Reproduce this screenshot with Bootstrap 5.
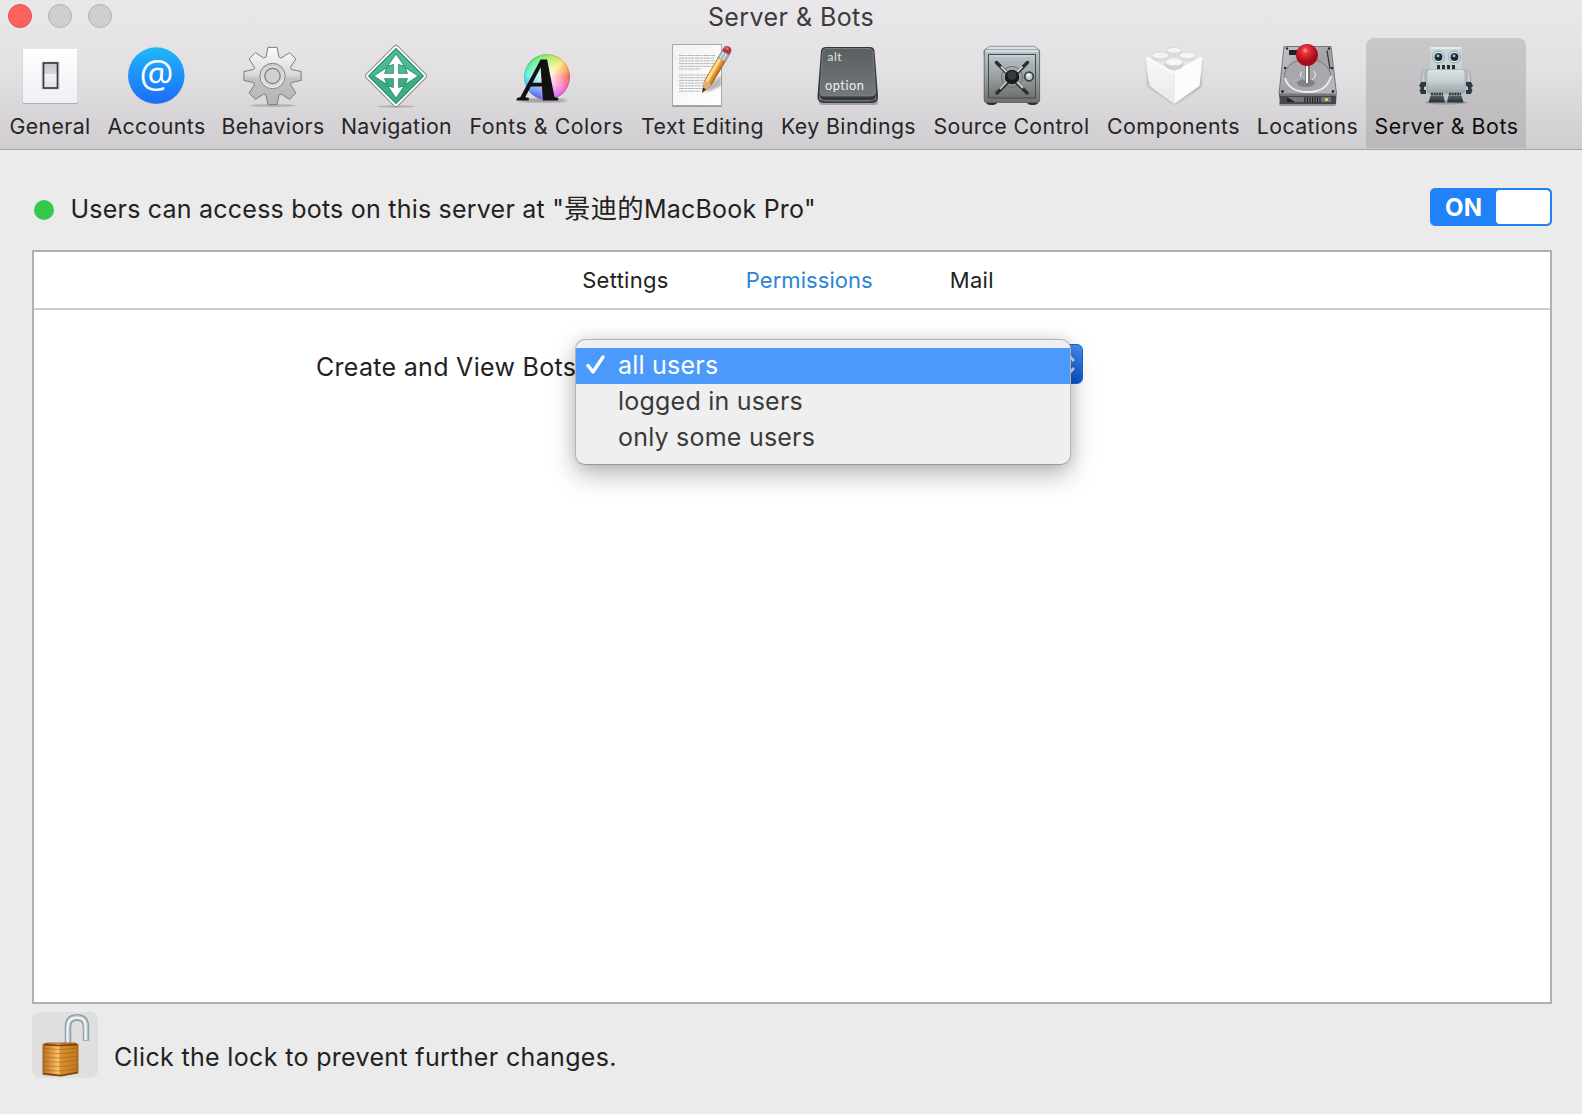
<!DOCTYPE html>
<html lang="en">
<head>
<meta charset="utf-8">
<title>Server &amp; Bots</title>
<link href="https://cdn.jsdelivr.net/npm/bootstrap@5.3.0/dist/css/bootstrap.min.css" rel="stylesheet">
<style>
body{font-family:Inter,"Noto Sans CJK SC",sans-serif;font-size:25px;letter-spacing:.34px;color:#222;background:#ebebeb;height:1114px;overflow:hidden}
.win-head{height:150px;background:linear-gradient(#e9e7e9,#e3e1e4 45%,#cfcdd0);border-bottom:1px solid #a5a3a6}
.title-bar{height:34px;margin-bottom:4px}
.win-title{line-height:34px;color:#3b3a3c;letter-spacing:.43px}
.light{width:24px;height:24px;border-radius:50%;background:#cfcfcf;border:1px solid #b2b0b3}
.light-red{background:#fc615d;border-color:#e0504d}
.lights{gap:16px;left:8px;top:4px}
.tool{height:110px;padding-top:6px;font-size:21.3px;letter-spacing:.38px;color:#262527;border-radius:8px 8px 0 0}
.tool svg{width:64px;height:64px;display:block;overflow:visible;letter-spacing:0}
.tool span{line-height:28px;margin-top:4px;padding-left:1px;white-space:nowrap}
.tool.chosen{background:linear-gradient(#c9c7ca,#bbb9bc);color:#0d0d0d}
.w1{width:99px}.w2{width:114px}.w3{width:119px}.w4{width:128px}.w5{width:172px;letter-spacing:.55px}.w6{width:140px;letter-spacing:.43px}.w7{width:152px;letter-spacing:.4px}.w8{width:174px}.w9{width:150px;letter-spacing:.44px}.w10{width:118px}.w11{width:160px;letter-spacing:.55px}
.page{padding:38px 30px 0 32px}
.status-row{height:38px}
.status-info{padding-top:6px}
.dot{width:20px;height:20px;border-radius:50%;background:#35c84a;margin-left:2px}
.status-text{line-height:32px;margin-left:16.5px;margin-top:-2px;letter-spacing:.22px}
.status-text span{font-size:26.4px;line-height:1}
.toggle{width:122px;height:38px;border-radius:5px;background:#2182f7;padding:2px;color:#fff;font-weight:700;font-size:24px}
.toggle i{width:54px;height:34px;border-radius:4px;background:#fff}
.toggle span{margin-left:13px;line-height:36px}
.panel{margin-top:24px;height:754px;border:2px solid #b0b0b0;background:#fff}
.tabs{height:58px;border-bottom:2px solid #ccc;font-size:22px;line-height:56px;gap:77px;padding-right:8px;letter-spacing:.3px}
.tabs a{color:#1f1f1f;text-decoration:none}
.tabs a.on{color:#2e84d6;letter-spacing:.06px}
.form-line{margin-top:34px;padding-left:282px}
.form-line label{line-height:46px;width:260px;white-space:nowrap;letter-spacing:.3px}
.picker{width:507px;height:40px;border-radius:6px;background:linear-gradient(#468ff0,#0a56d0);border:1px solid #1c62cf}
.picker>svg{width:20px;height:32px;right:7px;top:3px}
.menu{left:-2px;top:-6px;width:496px;height:126px;padding:8px 0;background:#efefef;border:1px solid #b3b3b3;border-bottom-color:#989898;border-radius:10px;box-shadow:0 10px 26px rgba(0,0,0,.27),0 0 14px rgba(0,0,0,.1);color:#3a3a3a;z-index:2;letter-spacing:.22px}
.menu div{height:36px;line-height:34px;padding-left:42px;white-space:nowrap}
.menu div.hot{background:#4a99fb;color:#fff}
.menu svg{left:9px;top:14px;width:22px;height:22px}
.foot{margin-top:8px}
.lock{width:66px;height:66px;border-radius:8px;background:#dfdfdf}
.foot span{line-height:42px;padding-top:24px;margin-left:16px}
.wheel{width:46px;height:46px;border-radius:50%;background:radial-gradient(#fff 3%,#ffffff00 75%),conic-gradient(#8be854,#f6e650 45deg,#fb5b50 90deg,#f657c4 125deg,#d75cf5 155deg,#4a5df0 210deg,#46b4f5 245deg,#46f0e0 275deg,#4ce77c 320deg,#8be854);box-shadow:inset 0 0 2px rgba(0,0,0,.45)}
</style>
</head>
<body>
<header class="win-head">
  <div class="title-bar position-relative d-flex justify-content-center">
    <div class="lights position-absolute d-flex"><i class="light light-red"></i><i class="light"></i><i class="light"></i></div>
    <span class="win-title">Server &amp; Bots</span>
  </div>
  <nav class="d-flex">
    <div class="tool w1 d-flex flex-column align-items-center">
      <svg viewBox="0 0 64 64"><defs><linearGradient id="g1" x2="0" y2="1"><stop stop-color="#fff"/><stop offset="1" stop-color="#eef0f4"/></linearGradient><linearGradient id="g1b" x2="0" y2="1"><stop stop-color="#c4c7cd"/><stop offset=".42" stop-color="#d5d7dc"/><stop offset=".45" stop-color="#f1f2f5"/><stop offset="1" stop-color="#dfe1e5"/></linearGradient></defs>
      <rect x="4.800" y="5.500" width="55" height="54.500" rx="1" fill="#9c9aa0" opacity=".7"/><rect x="5" y="5" width="54.600" height="54" rx="1" fill="url(#g1)"/><rect x="23.500" y="17.500" width="18" height="28" rx="1" fill="#b9bbc2" opacity=".6"/><rect x="25.500" y="19" width="14" height="25" fill="url(#g1b)" stroke="#3b3c41" stroke-width="1.700"/></svg>
      <span>General</span>
    </div>
    <div class="tool w2 d-flex flex-column align-items-center">
      <svg viewBox="0 0 64 64"><defs><linearGradient id="g2" x2="0" y2="1"><stop stop-color="#20b7f8"/><stop offset="1" stop-color="#1b6cfa"/></linearGradient></defs>
      <circle cx="32.300" cy="32.300" r="28" fill="#7a8ba8" opacity=".5"/><circle cx="32.300" cy="31.500" r="28.200" fill="url(#g2)"/><text x="32.500" y="43.700" font-family="Open Sans" font-size="38" fill="#fff" text-anchor="middle">@</text></svg>
      <span>Accounts</span>
    </div>
    <div class="tool w3 d-flex flex-column align-items-center">
      <svg viewBox="0 0 64 64"><defs><linearGradient id="g3" x2="0" y2="1"><stop stop-color="#fbfbfb"/><stop offset=".48" stop-color="#dadada"/><stop offset=".55" stop-color="#c2c2c2"/><stop offset="1" stop-color="#b5b5b5"/></linearGradient><linearGradient id="g3b" x2="0" y2="1"><stop stop-color="#c6c6c6"/><stop offset="1" stop-color="#f2f2f2"/></linearGradient></defs>
      <ellipse cx="31.500" cy="61.500" rx="23" ry="1.500" fill="#777" opacity=".4"/>
      <g transform="translate(31.500 32)"><path d="M-6.500-18.900-4.500-28.600H4.500L6.500-18.900 8.800-18 17-23.400 23.400-17 18-8.800 18.900-6.500 28.600-4.500V4.500L18.900 6.500 18 8.800 23.400 17 17 23.400 8.800 18 6.500 18.900 4.500 28.600H-4.500L-6.500 18.900-8.800 18-17 23.400-23.400 17-18 8.800-18.900 6.500-28.600 4.500V-4.500L-18.900-6.500-18-8.800-23.400-17-17-23.400-8.800-18Z" fill="url(#g3)" stroke="#7c7c7c" stroke-width="1" stroke-linejoin="round"/><circle r="12.700" fill="url(#g3b)" stroke="#858585"/><circle r="10.500" fill="#d9d9d9"/><circle r="7.700" fill="#d1d0d2" stroke="#7c7c7c" stroke-width="1.200"/></g></svg>
      <span>Behaviors</span>
    </div>
    <div class="tool w4 d-flex flex-column align-items-center">
      <svg viewBox="0 0 64 64"><ellipse cx="32" cy="62.500" rx="19" ry="1.200" fill="#666" opacity=".35"/>
      <rect x="9.600" y="9.600" width="44.800" height="44.800" rx="3" transform="rotate(45 32 32)" fill="#fff" stroke="#8d8d8d"/><rect x="11.900" y="11.900" width="40.200" height="40.200" rx="1.500" transform="rotate(45 32 32)" fill="#2a8f68"/><rect x="13.100" y="13.100" width="37.800" height="37.800" rx="1" transform="rotate(45 32 32)" fill="#3aaf84"/><path d="M32 5.500 58.500 32H5.500Z" fill="#6bd0ad" opacity=".35"/>
      <path d="M32 10.500 39.500 21.500 34.200 20V29.800H44L42 24.500 53.500 32 42 39.500 44 34.200H34.200V44L39.500 42.500 32 53.500 24.500 42.500 29.800 44V34.200H20L22 39.500 10.500 32 22 24.500 20 29.800H29.800V20L24.500 21.500Z" fill="#fff" stroke="#24835f" stroke-width="1.400" paint-order="stroke"/></svg>
      <span>Navigation</span>
    </div>
    <div class="tool w5 d-flex flex-column align-items-center">
      <svg viewBox="0 0 64 64"><defs><filter id="b5"><feGaussianBlur stdDeviation="1.500"/></filter></defs><ellipse cx="29" cy="56.500" rx="24" ry="2" fill="#444" opacity=".5" filter="url(#b5)"/><foreignObject x="10" y="10" width="46" height="46"><div class="wheel"></div></foreignObject><text x="6.500" y="56" font-family="Liberation Serif" font-style="italic" font-size="61" fill="#111" stroke="#111" stroke-width="1.200" textLength="37" lengthAdjust="spacingAndGlyphs">A</text><path d="M28.500 18 31 54" stroke="#111" stroke-width="4.500"/></svg>
      <span>Fonts &amp; Colors</span>
    </div>
    <div class="tool w6 d-flex flex-column align-items-center">
      <svg viewBox="0 0 64 64"><defs><linearGradient id="g6" x2="1" y2="1"><stop stop-color="#f2f2f2"/><stop offset="1" stop-color="#fff"/></linearGradient><linearGradient id="g6b"><stop stop-color="#f7cf5e"/><stop offset=".35" stop-color="#fce58c"/><stop offset=".5" stop-color="#f3a83d"/><stop offset="1" stop-color="#b8641c"/></linearGradient><filter id="b6"><feGaussianBlur stdDeviation="1.300"/></filter></defs>
      <rect x="2" y="1" width="50" height="62" fill="#777" opacity=".6"/><rect x="2.500" y=".5" width="49" height="61" fill="url(#g6)" stroke="#a9a9ab"/>
      <path d="M9 11.500H45M9 14.200H44M9 16.900H45M9 19.600H44M9 22.300H43M9 25H31M9 31H44M9 33.700H42M9 36.400H41M9 39.100H39M9 41.800H38M9 44.500H34M9 47.200H31" stroke="#b8b8b8" stroke-width="1" stroke-dasharray="5 .6 3 .5 6 .7"/>
      <path d="M33 48 51 31V42L40 47Z" fill="#555" opacity=".42" filter="url(#b6)"/>
      <g transform="translate(32.300 48.500) rotate(30.500)"><path d="M0 0-4-11V-40H4V-11Z" fill="url(#g6b)" stroke="#915016" stroke-width=".6"/><path d="M0 0-4-11 0-12.500 4-11Z" fill="#e2ae7c"/><path d="M0 0-1.600-4.600H1.600Z" fill="#222"/><rect x="-4.300" y="-46" width="8.600" height="8" fill="#a4aeb5" stroke="#7a838a" stroke-width=".5"/><path d="M-2-46V-38M1-46V-38" stroke="#dfe6ea" stroke-width="1.300"/><path d="M-4.300-46V-49Q-4-53 0-53T4.300-49V-46Z" fill="#b83744"/><ellipse cx="-1" cy="-50.500" rx="1.800" ry="1.100" fill="#de7b82"/></g></svg>
      <span>Text Editing</span>
    </div>
    <div class="tool w7 d-flex flex-column align-items-center">
      <svg viewBox="0 0 64 64"><defs><linearGradient id="g7" x2="0" y2="1"><stop stop-color="#5b5f60"/><stop offset="1" stop-color="#72777a"/></linearGradient></defs>
      <rect x="3" y="54" width="59" height="7" rx="3" fill="#777" opacity=".55"/><path d="M10 3H54Q58 3 58.500 7L62 52Q62.500 59 56 59H8Q1 59 1.500 52L5 7Q5.500 3 10 3Z" fill="#35383a"/><path d="M3 50 5 54Q6 56 10 56H55Q59 56 61 50L60 56 53 57.500H10L3 56Z" fill="#707376"/><path d="M10 4.500H53Q56.500 4.500 57 8L59.500 48Q59.500 52 55.500 52H8Q3.500 52 4 48L6.500 8Q7 4.500 10 4.500Z" fill="url(#g7)" stroke="#85898b" stroke-width=".8"/>
      <text x="11.500" y="17" font-family="Lato, sans-serif" font-size="12" letter-spacing=".5" fill="#e4e4e4">alt</text><text x="9" y="46" font-family="Lato, sans-serif" font-size="12.800" letter-spacing=".5" fill="#eee">option</text></svg>
      <span>Key Bindings</span>
    </div>
    <div class="tool w8 d-flex flex-column align-items-center">
      <svg viewBox="0 0 64 64"><defs><linearGradient id="g8" x2="0" y2="1"><stop stop-color="#b7c5ca"/><stop offset=".5" stop-color="#9ba1a2"/><stop offset="1" stop-color="#6f6f6f"/></linearGradient></defs>
      <path d="M7 57H18V59Q17 61 12 61T7 58ZM48 57H59V59Q58 61 53 61T48 58Z" fill="#2d2d2d"/><path d="M11 2.300H55L60.500 6V10H5V6Z" fill="#dce4e7" stroke="#78858a" stroke-width=".8"/><rect x="5.200" y="6" width="55.400" height="52.500" rx="2.500" fill="url(#g8)" stroke="#59605f" stroke-width=".9"/><path d="M6.500 7H59.500" stroke="#e6eef0" stroke-width="1.300"/><rect x="9.500" y="10.500" width="47" height="43.500" fill="url(#g8)" stroke="#444b4d"/><path d="M10.500 12H55.500" stroke="#dbe5e8" stroke-width=".8"/>
      <circle cx="33" cy="33" r="10.500" fill="none" stroke="#687073" stroke-width="1"/><path d="M17.500 18.500 48 49M48.500 18.500 18 49" stroke="#2c2e30" stroke-width="3.400" stroke-linecap="round"/><path d="M22 22.500 28 28.500M37.500 37.500 44 44M43.500 22.500 38 28M28 37.500 21 45" stroke="#cfd3d5" stroke-width="1.800"/><circle cx="33" cy="33" r="7.200" fill="#18191b"/><circle cx="33" cy="31.500" r="4.500" fill="#393a3f"/><circle cx="50" cy="32.500" r="4.300" fill="#c4cacc" stroke="#3a3f41" stroke-width="1.700"/><circle cx="49.500" cy="31" r="1.800" fill="#f0f3f4"/></svg>
      <span>Source Control</span>
    </div>
    <div class="tool w9 d-flex flex-column align-items-center">
      <svg viewBox="0 0 64 64"><defs><linearGradient id="g9" x2="0" y2="1"><stop stop-color="#f8f8f8"/><stop offset="1" stop-color="#e9e9e9"/></linearGradient><filter id="b9"><feGaussianBlur stdDeviation="1.800"/></filter></defs>
      <path d="M6 16 60 16 60 43 33 60 7 42Z" fill="#777" opacity=".55" filter="url(#b9)"/><path d="M5 13.500 27 5.500H39L61 13.500 33 29Z" fill="#e9e9e9"/><path d="M5 13.500 33 29V60L8.500 42Q5.500 28 5 13.500Z" fill="url(#g9)"/><path d="M61 13.500 33 29V60L58.500 42Q60.500 28 61 13.500Z" fill="#fcfcfc"/><path d="M5 13.500 33 29 61 13.500" fill="none" stroke="#fff" stroke-width="1.500"/><path d="M33 29V60" stroke="#e2e2e2" stroke-width=".8"/>
      <g stroke="#cfcfcf" stroke-width=".6"><path d="M25.500 6V9Q26 12.500 33 12.500T40.500 9V6Z" fill="#dcdcdc"/><ellipse cx="33" cy="6.300" rx="7.500" ry="2.900" fill="#f4f4f4"/><path d="M11 11.500V13.500Q12 17 19.500 17T28 13.500V11.500Z" fill="#dcdcdc"/><ellipse cx="19.500" cy="11.500" rx="8.500" ry="3.300" fill="#f4f4f4"/><path d="M38 11.500V13.500Q39 17 46.500 17T55 13.500V11.500Z" fill="#dcdcdc"/><ellipse cx="46.500" cy="11.500" rx="8.500" ry="3.300" fill="#f4f4f4"/><path d="M24 18.500V21Q25 25.500 33 25.500T42 21V18.500Z" fill="#d2d2d2"/><ellipse cx="33" cy="18" rx="9" ry="3.900" fill="#f6f6f6"/></g></svg>
      <span>Components</span>
    </div>
    <div class="tool w10 d-flex flex-column align-items-center">
      <svg viewBox="0 0 64 64"><defs><linearGradient id="g10" x2="1" y2="1"><stop stop-color="#c9c9cc"/><stop offset=".5" stop-color="#a2a2a6"/><stop offset="1" stop-color="#bcbcc0"/></linearGradient><radialGradient id="g10b" cx=".42" cy=".3"><stop stop-color="#ff9a92"/><stop offset=".3" stop-color="#e5333a"/><stop offset="1" stop-color="#a80c1a"/></radialGradient></defs>
      <rect x="4" y="57" width="57" height="5" rx="2" fill="#555" opacity=".5"/><path d="M9 2.500H56L61.500 50H4Z" fill="url(#g10)" stroke="#6c6c70" stroke-width=".9"/><path d="M4 50H61.500L61 60H5Z" fill="#46464c"/><path d="M5 51H61" stroke="#a5a5aa" stroke-width="1.200"/><path d="M12 53H56V58H12Z" fill="#74747c"/><path d="M12 53 20 58H12Z" fill="#222"/><path d="M30 53V58.500M32.500 53V58.500M35 53V58.500M37.500 53V58.500M40 53V58.500M42.500 53V58.500M45 53V58.500" stroke="#1e1e22" stroke-width="1.200"/><circle cx="51.500" cy="55.500" r="1.600" fill="#eee543"/>
      <ellipse cx="32.500" cy="31.500" rx="23" ry="16.500" fill="#a9a9ad" stroke="#77777b"/><path d="M10 34Q14 48 33 48T56 32" fill="none" stroke="#eee" stroke-width="1.800"/><ellipse cx="33" cy="31" rx="7.500" ry="5.500" fill="#aaa" stroke="#eee" stroke-dasharray="6 3"/><ellipse cx="31" cy="39" rx="9" ry="4" fill="#555" opacity=".45"/>
      <path d="M52 6.500 55 25" stroke="#333" stroke-width="1.300"/><rect x="14" y="6" width="9" height="5" fill="#222"/><g fill="#28282b"><circle cx="12" cy="4.500" r="1.200"/><circle cx="54" cy="4.500" r="1.200"/><circle cx="10" cy="24" r="1.200"/><circle cx="57" cy="24" r="1.200"/><circle cx="7.500" cy="47.500" r="1.400"/><circle cx="58" cy="47.500" r="1.400"/></g>
      <path d="M30 20H35V39Q32.500 40.500 30 39Z" fill="#6e6e72"/><path d="M32 21V39" stroke="#fff" stroke-width="2.200"/><circle cx="32" cy="11" r="11" fill="url(#g10b)"/></svg>
      <span>Locations</span>
    </div>
    <div class="tool chosen w11 d-flex flex-column align-items-center">
      <svg viewBox="0 0 64 64"><defs><linearGradient id="g11" x2="0" y2="1"><stop stop-color="#dbe3e4"/><stop offset=".45" stop-color="#c9d2d4"/><stop offset="1" stop-color="#96a2a6"/></linearGradient><linearGradient id="g11b" x2="0" y2="1"><stop stop-color="#56656b"/><stop offset="1" stop-color="#222d33"/></linearGradient></defs>
      <ellipse cx="32" cy="58.500" rx="21" ry="2" fill="#666" opacity=".4"/><rect x="16" y="3" width="32" height="23" rx="1.500" fill="#c9d3d5"/><path d="M16.500 4H47.500" stroke="#edf3f4" stroke-width="1.500"/><circle cx="24.500" cy="13" r="5.800" fill="#edf2f3" stroke="#8d999d"/><circle cx="40.500" cy="13" r="5.800" fill="#edf2f3" stroke="#8d999d"/><circle cx="24.500" cy="13" r="4" fill="#182b3a"/><circle cx="40.500" cy="13" r="4" fill="#182b3a"/><circle cx="24" cy="11.800" r="1.500" fill="#92bdd5"/><circle cx="40" cy="11.800" r="1.500" fill="#92bdd5"/><path d="M24.500 21V25.500M29.500 21V25.500M34.500 21V25.500M39.500 21V25.500" stroke="#222f35" stroke-width="3"/>
      <path d="M13 26H11Q7.500 27 7.500 32V38H11V30ZM51 26H53Q56.500 27 56.500 32V38H53V30Z" fill="#c3ced1" stroke="#8c989c" stroke-width=".7"/><path d="M7 38H12V42L10 43V46H12V50H7L5.500 46 7 44 5 42ZM57 38H52V42L54 43V46H52V50H57L58.500 46 57 44 59 42Z" fill="#2c3940"/><rect x="13" y="25.500" width="38" height="24" rx="3" fill="url(#g11)" stroke="#98a3a7" stroke-width=".6"/><path d="M17 50H29M35 50H47" stroke="#2c383e" stroke-width="2.500" stroke-dasharray="2 .7"/><path d="M16.500 51.500H29.500L31 58.500H14.500ZM34.500 51.500H47.500L49.500 58.500H33Z" fill="url(#g11b)"/></svg>
      <span>Server &amp; Bots</span>
    </div>
  </nav>
</header>
<main class="page">
  <div class="status-row d-flex justify-content-between">
    <div class="status-info d-flex align-items-center"><i class="dot"></i><div class="status-text">Users can access bots on this server at "<span>景迪的</span>MacBook Pro"</div></div>
    <div class="toggle d-flex justify-content-between"><span>ON</span><i></i></div>
  </div>
  <section class="panel">
    <nav class="tabs d-flex justify-content-center"><a>Settings</a><a class="on">Permissions</a><a>Mail</a></nav>
    <div class="form-line d-flex align-items-start">
      <label>Create and View Bots</label>
      <div class="picker position-relative">
        <svg class="position-absolute" viewBox="0 0 20 32"><path d="M8 13 13.500 7 19 13M8 20 13.500 26 19 20" fill="none" stroke="#d3e4fb" stroke-width="2.600"/></svg>
        <div class="menu position-absolute">
          <svg class="position-absolute" viewBox="0 0 22 22"><path d="M3 11.500 8 18 18 3" fill="none" stroke="#fff" stroke-width="3.400" stroke-linecap="round" stroke-linejoin="round"/></svg>
          <div class="hot">all users</div><div>logged in users</div><div>only some users</div>
        </div>
      </div>
    </div>
  </section>
  <footer class="foot d-flex align-items-center">
    <svg class="lock" viewBox="0 0 66 66"><defs><linearGradient id="gl"><stop stop-color="#b8701f"/><stop offset=".35" stop-color="#eeb055"/><stop offset=".44" stop-color="#f7c674"/><stop offset=".5" stop-color="#d9902f"/><stop offset="1" stop-color="#c0761d"/></linearGradient></defs>
    <path d="M36 33V15Q36 5.500 45 5.500T54 15V28.500" fill="none" stroke="#77858c" stroke-width="6.400"/><path d="M36 33V15Q36 5.500 45 5.500T54 15V28" fill="none" stroke="#b4c1c7" stroke-width="5"/><path d="M35.500 33V15Q36 5.500 45 5.500T53.500 15V28" fill="none" stroke="#f3f8fa" stroke-width="2"/>
    <path d="M11 32.500 15 31H43L46 32.500V61L29 64 11 62.500Z" fill="url(#gl)" stroke="#935310" stroke-width=".8"/><path d="M11.500 36.500 28 37.500 45.500 36M11.500 40.700 28 41.700 45.500 40.200M11.500 45 28 46 45.500 44.400M11.500 49.300 28 50.300 45.500 48.600M11.500 53.600 28 54.600 45.500 52.800M11.500 58 28 59 45.500 57" fill="none" stroke="#95560f" stroke-width="1" opacity=".45"/><path d="M12 32.600 28 33.500 45 32.600" fill="none" stroke="#7d430c" stroke-width="1.600"/><path d="M11.500 61.500 29 63.500 45.500 60.500" fill="none" stroke="#7e430a" stroke-width="1.500"/></svg>
    <span>Click the lock to prevent further changes.</span>
  </footer>
</main>
<script src="https://cdn.jsdelivr.net/npm/bootstrap@5.3.0/dist/js/bootstrap.bundle.min.js"></script>
</body>
</html>
